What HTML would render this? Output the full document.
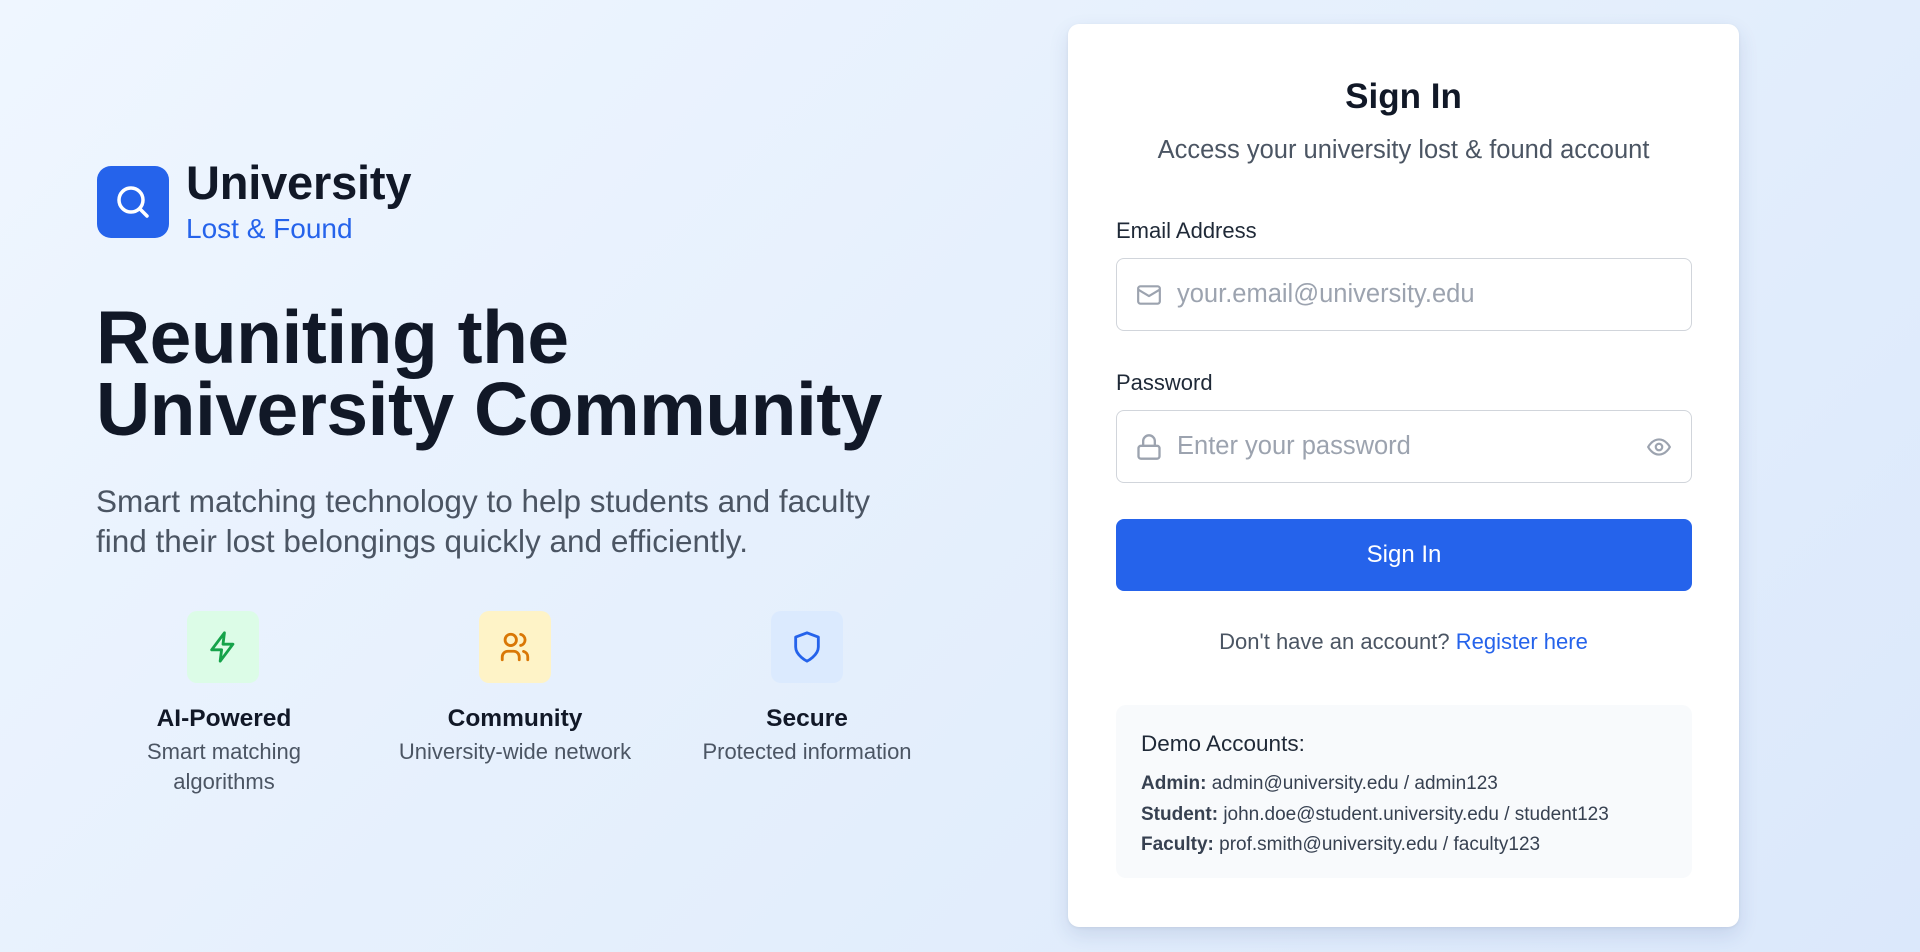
<!DOCTYPE html>
<html><head><meta charset="utf-8"><style>
*{margin:0;padding:0;box-sizing:border-box}
body{width:1920px;height:952px;overflow:hidden;font-family:"Liberation Sans",sans-serif;background:linear-gradient(135deg,#eff6ff 0%,#e3eefc 60%,#dbe8fb 100%);position:relative;color:#111827}
.a{position:absolute}
.logo{left:97px;top:166px;width:72px;height:72px;background:#2563eb;border-radius:14px}
.t1{left:186px;top:155px;font-size:47px;font-weight:bold;color:#111827;letter-spacing:-0.2px}
.t2{left:186px;top:213px;font-size:28px;color:#2563eb}
.h1{left:96px;top:301px;font-size:75px;font-weight:bold;line-height:72px;color:#111827;letter-spacing:-0.5px}
.p{left:96px;top:481px;font-size:31.5px;line-height:40px;color:#4b5563}
.fi{width:72px;height:72px;border-radius:10px;top:611px;display:flex;align-items:center;justify-content:center}
.ft{top:705px;width:320px;text-align:center;font-size:24.5px;font-weight:bold;color:#111827}
.fd{top:737px;width:320px;text-align:center;font-size:22px;line-height:30px;color:#4b5563}
.card{left:1068px;top:24px;width:671px;height:903px;background:#fff;border-radius:11px;box-shadow:0 8px 20px rgba(30,60,120,.12),0 1px 3px rgba(0,0,0,.06)}
.inp{left:1116px;width:576px;height:73px;border:1.5px solid #d1d5db;border-radius:8px}
.ph{position:absolute;left:60px;top:21px;font-size:25.5px;color:#9ca3af}
.lbl{left:1116px;font-size:22px;color:#1f2937}
</style></head><body>
<div class="a logo"><svg width="72" height="72" viewBox="0 0 72 72"><circle cx="34" cy="34" r="12" fill="none" stroke="#fff" stroke-width="3.5"/><line x1="43" y1="43" x2="50" y2="50" stroke="#fff" stroke-width="3.5" stroke-linecap="round"/></svg></div>
<div class="a t1">University</div>
<div class="a t2">Lost &amp; Found</div>
<div class="a h1">Reuniting the<br>University Community</div>
<div class="a p">Smart matching technology to help students and faculty<br>find their lost belongings quickly and efficiently.</div>

<div class="a fi" style="left:187px;background:#dcfce7"><svg width="34" height="34" viewBox="0 0 24 24" fill="none" stroke="#16a34a" stroke-width="2" stroke-linejoin="round" stroke-linecap="round"><path d="M13 2 4 14h7l-1 8 9-12h-7z"/></svg></div>
<div class="a fi" style="left:479px;background:#fef3c7"><svg width="34" height="34" viewBox="0 0 24 24" fill="none" stroke="#d97706" stroke-width="2" stroke-linecap="round"><circle cx="9" cy="7" r="4"/><path d="M3 21v-2a4 4 0 0 1 4-4h4a4 4 0 0 1 4 4v2M16 3.1a4 4 0 0 1 0 7.8M21 21v-2a4 4 0 0 0-3-3.9"/></svg></div>
<div class="a fi" style="left:771px;background:#dbeafe"><svg width="34" height="34" viewBox="0 0 24 24" fill="none" stroke="#2563eb" stroke-width="2" stroke-linejoin="round"><path d="M12 22s8-4 8-10V5l-8-3-8 3v7c0 6 8 10 8 10z"/></svg></div>
<div class="a ft" style="left:64px">AI-Powered</div>
<div class="a fd" style="left:64px">Smart matching<br>algorithms</div>
<div class="a ft" style="left:355px">Community</div>
<div class="a fd" style="left:355px">University-wide network</div>
<div class="a ft" style="left:647px">Secure</div>
<div class="a fd" style="left:647px">Protected information</div>

<div class="a card"></div>
<div class="a" style="left:1068px;width:671px;top:77px;text-align:center;font-size:35px;font-weight:bold;color:#111827">Sign In</div>
<div class="a" style="left:1068px;width:671px;top:136px;text-align:center;font-size:25.5px;color:#4b5563">Access your university lost &amp; found account</div>
<div class="a lbl" style="top:218px">Email Address</div>
<div class="a inp" style="top:258px"><svg class="a" style="left:18px;top:23px" width="28" height="26" viewBox="0 0 24 24" fill="none" stroke="#9ca3af" stroke-width="2" stroke-linejoin="round"><rect x="2" y="4" width="20" height="16" rx="2"/><path d="m2 7 10 6 10-6"/></svg><div class="ph">your.email@university.edu</div></div>
<div class="a lbl" style="top:370px">Password</div>
<div class="a inp" style="top:410px"><svg class="a" style="left:18px;top:22px" width="28" height="28" viewBox="0 0 24 24" fill="none" stroke="#9ca3af" stroke-width="2" stroke-linejoin="round"><rect x="3" y="11" width="18" height="11" rx="2"/><path d="M7 11V7a5 5 0 0 1 10 0v4"/></svg><div class="ph">Enter your password</div><svg class="a" style="left:528px;top:23px" width="28" height="26" viewBox="0 0 24 24" fill="none" stroke="#9ca3af" stroke-width="2"><path d="M2 12s3.5-7 10-7 10 7 10 7-3.5 7-10 7S2 12 2 12z"/><circle cx="12" cy="12" r="3"/></svg></div>
<div class="a" style="left:1116px;top:519px;width:576px;height:72px;background:#2563eb;border-radius:8px;color:#fff;font-size:24px;text-align:center;line-height:72px">Sign In</div>
<div class="a" style="left:1068px;width:671px;top:629px;text-align:center;font-size:22px;color:#4b5563">Don't have an account? <span style="color:#2563eb">Register here</span></div>
<div class="a" style="left:1116px;top:705px;width:576px;height:173px;background:#f8fafc;border-radius:10px"></div>
<div class="a" style="left:1141px;top:731px;font-size:22.5px;color:#1f2937">Demo Accounts:</div>
<div class="a" style="left:1141px;top:769px;font-size:19px;line-height:30.5px;color:#374151"><b>Admin:</b> admin@university.edu / admin123<br><b>Student:</b> john.doe@student.university.edu / student123<br><b>Faculty:</b> prof.smith@university.edu / faculty123</div>
</body></html>
